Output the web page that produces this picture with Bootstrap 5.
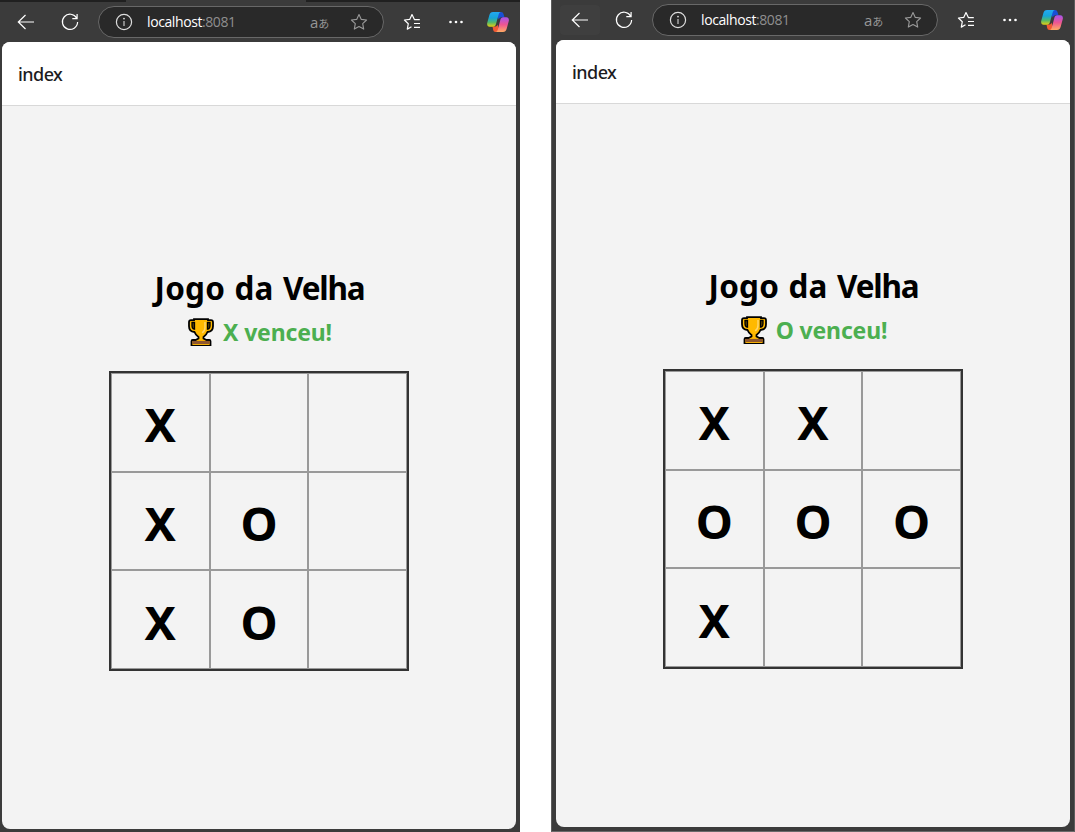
<!DOCTYPE html>
<html lang="pt">
<head>
<meta charset="utf-8">
<title>Jogo da Velha</title>
<link href="https://cdn.jsdelivr.net/npm/bootstrap@5.3.0/dist/css/bootstrap.min.css" rel="stylesheet">
<style>
body{background:#fff;font-family:"Noto Sans","Open Sans",sans-serif;width:1075px;height:832px;overflow:hidden}
.browser{background:#3b3b3b;height:832px}
.first{width:520px;padding:0 4px 3px 2px}
.second{width:524px;margin-left:31px;padding:0 4px 4px 4px;border-left:1px solid #5c5c5c;border-right:1px solid #5c5c5c;border-bottom:1px solid #6a6a6a}
.tabs{height:2px;margin:0 -4px 0 -2px}
.tabs span{background:#202020;height:2px}
.toolbar{height:40px;margin-left:2px;margin-right:-4px;color:#fff}
.tool{width:44px;height:40px;flex:none}
.tool-last{width:40px}
.hovered{position:relative}
.hovered::before{content:"";position:absolute;inset:5px 2px;border-radius:4px;background:#3f3f3f}
.hovered svg{position:relative}
.address{width:286px;height:32px;border:1px solid #686868;border-radius:16px;background:#292929;margin:0 6px;padding:0 15px 0 16px;flex:none}
.url{font:14px/20px "Open Sans",sans-serif;margin-left:14px;letter-spacing:-.4px}
.url b{font-weight:400;color:#8f8f8f;letter-spacing:-.45px}
.lang{font:15px/18px "Open Sans","Noto Sans CJK JP",sans-serif;color:#969696;width:18px;margin-right:22px;white-space:nowrap}
.lang span{font-size:11px;font-family:"Noto Sans CJK JP",sans-serif}
.viewport{background:#f3f3f3;border-radius:8px;overflow:hidden;height:787px}
.app-head{height:64px;background:#fff;border-bottom:1px solid #d8d8d8;padding-left:16px;font-size:18px;font-weight:500;color:#1c1c1e;line-height:24px;padding-top:20px}
.app-head span{letter-spacing:-.55px}
.app-title{font-size:31.500px;font-weight:700;line-height:43px;color:#000;margin:0 0 0 1px;white-space:nowrap;letter-spacing:.2px;word-spacing:1px}
.app-title span{letter-spacing:-1.2px}
.result{font-size:23px;font-weight:700;line-height:32px;color:#4caf50;margin:7px 0 23px 2px;height:32px;white-space:nowrap;letter-spacing:-.15px}
.result svg{margin-right:9px}
.game{padding-top:160px}
.board{width:300px;height:300px;border:2px solid #333;display:grid;grid-template-columns:repeat(3,1fr);grid-template-rows:repeat(3,1fr)}
.board div{border:1px solid #999;font-size:47px;font-weight:700;line-height:1;color:#000;display:flex;align-items:center;justify-content:center;padding-top:5px}
svg{display:block;flex:none}
</style>
</head>
<body>
<svg width="0" height="0" class="position-absolute" aria-hidden="true">
<defs>
<linearGradient id="ga" x1="0" y1="0" x2="0" y2="1"><stop offset="0" stop-color="#23a9f2"/><stop offset=".4" stop-color="#16a4d8"/><stop offset=".7" stop-color="#52b96a"/><stop offset="1" stop-color="#e8cf10"/></linearGradient>
<linearGradient id="gb" x1="0" y1="0" x2="0" y2="1"><stop offset="0" stop-color="#a554ee"/><stop offset=".5" stop-color="#ee5591"/><stop offset="1" stop-color="#ffab63"/></linearGradient>
<symbol id="back" viewBox="0 0 18 16"><path d="M17 8H1.5M8.5 1L1.3 8l7.2 7" fill="none" stroke="#fff" stroke-width="1.2"/></symbol>
<symbol id="reload" viewBox="0 0 18 18"><path d="M15.7 5.2A7.6 7.6 0 1 0 16.6 9M16.1 1v4.6h-4.8" fill="none" stroke="#fff" stroke-width="1.2"/></symbol>
<symbol id="info" viewBox="0 0 18 18"><circle cx="9" cy="9" r="7.6" fill="none" stroke="#dedede" stroke-width="1.2"/><path d="M9 8v5" stroke="#bbb" stroke-width="1.3"/><circle cx="9" cy="5.6" r=".9" fill="#ddd"/></symbol>
<symbol id="star" viewBox="0 0 18 18"><path d="M9 1.5l2.3 4.9 5.3.6-3.9 3.7 1 5.4L9 13.5l-4.7 2.6 1-5.4L1.4 7l5.3-.6z" fill="none" stroke="#999" stroke-width="1.1" stroke-linejoin="round"/></symbol>
<symbol id="favs" viewBox="0 0 18 18"><path d="M16.8 6.6h-5.4L9 1.5 6.7 6.4 1.4 7l3.900 3.700-1 5.400 4.200-2.300M11 10.500h6M11 14.300h6" fill="none" stroke="#fff" stroke-width="1.2" stroke-linejoin="round"/></symbol>
<symbol id="dots" viewBox="0 0 16 4"><circle cx="2.5" cy="2" r="1.3" fill="#fff"/><circle cx="8" cy="2" r="1.3" fill="#fff"/><circle cx="13.5" cy="2" r="1.3" fill="#fff"/></symbol>
<symbol id="copilot" viewBox="0 0 22 20"><path d="M12 0h2c1.5 0 2.1.8 2.5 2l1 3.2h-3c-1.6 0-2.3 1-2.8 2.3L10 3z" fill="#1950d5"/><path d="M5.5 14.5h3c1 0 1.7-.7 2-2l1.8 6c-.5 1-1 1.5-2 1.5H8.6c-1.7 0-2-.8-2.4-2z" fill="#f15a34"/><path d="M6 0h8c-1.4 0-1.9 1.2-2.4 2.8L9 12c-.5 1.8-1.3 2.8-3 2.8H2.7C.6 14.8-.2 13 .2 11L2.4 3C3 1 4 0 6 0z" fill="url(#ga)"/><path d="M16 20H8.5c1.4 0 1.9-1.2 2.4-2.8L13.3 8c.5-1.8 1.3-2.8 3-2.8h3c2.1 0 2.9 1.8 2.5 3.8L19.6 17c-.6 2-1.6 3-3.6 3z" fill="url(#gb)"/></symbol>
<symbol id="cup" viewBox="0 0 26 28"><path d="M6 1.2h14v1H23c1.2 0 2 .8 2 2v4c0 3.3-2 5.5-5.5 5.8-1 2.6-2.4 4-4 5v1.500l3 1.500h2.800q1.200 0 1.200 1.200v4.600h-19v-4.600q0-1.200 1.200-1.200h2.800l3-1.500v-1.500c-1.600-1-3-2.400-4-5C3 13.700 1 11.500 1 8.200v-4c0-1.200.8-2 2-2h3z" fill="#ffb900" stroke="#000" stroke-width="1.800"/><path d="M6.500 4.500H4v3.200c0 1.800.7 3.200 2.500 3.500zM19.500 4.500H22v3.200c0 1.800-.7 3.200-2.500 3.500z" fill="#5a4200" stroke="#000" stroke-width="1.300"/><path d="M17 4v5.500q0 3.500-2.800 5.300" fill="none" stroke="#ffd56a" stroke-width="1.500"/><path d="M4.400 22.900h17.200v3.200H4.400z" fill="#8e562e"/></symbol>
</defs>
</svg>
<main class="d-flex">
<section class="browser first">
<div class="tabs d-flex justify-content-between"><span style="width:126px"></span><span style="width:214px"></span></div>
<div class="toolbar d-flex align-items-center">
<div class="tool d-flex align-items-center justify-content-center"><svg width="18" height="16"><use href="#back"/></svg></div>
<div class="tool d-flex align-items-center justify-content-center"><svg width="18" height="18"><use href="#reload"/></svg></div>
<div class="address d-flex align-items-center"><svg width="18" height="18"><use href="#info"/></svg><div class="url">localhost<b>:8081</b></div><div class="lang ms-auto">a<span>あ</span></div><svg width="18" height="18"><use href="#star"/></svg></div>
<div class="tool d-flex align-items-center justify-content-center"><svg width="18" height="18"><use href="#favs"/></svg></div>
<div class="tool d-flex align-items-center justify-content-center"><svg width="16" height="4"><use href="#dots"/></svg></div>
<div class="tool tool-last d-flex align-items-center justify-content-center"><svg width="22" height="20"><use href="#copilot"/></svg></div>
</div>
<div class="viewport">
<header class="app-head"><span>index</span></header>
<div class="game d-flex flex-column align-items-center">
<h1 class="app-title">Jogo da <span>Velha</span></h1>
<div class="result d-flex align-items-center"><svg width="26" height="28"><use href="#cup"/></svg><span>X venceu!</span></div>
<div class="board"><div>X</div><div></div><div></div><div>X</div><div>O</div><div></div><div>X</div><div>O</div><div></div></div>
</div>
</div>
</section>
<section class="browser second">
<div class="toolbar d-flex align-items-center">
<div class="tool hovered d-flex align-items-center justify-content-center"><svg width="18" height="16"><use href="#back"/></svg></div>
<div class="tool d-flex align-items-center justify-content-center"><svg width="18" height="18"><use href="#reload"/></svg></div>
<div class="address d-flex align-items-center"><svg width="18" height="18"><use href="#info"/></svg><div class="url">localhost<b>:8081</b></div><div class="lang ms-auto">a<span>あ</span></div><svg width="18" height="18"><use href="#star"/></svg></div>
<div class="tool d-flex align-items-center justify-content-center"><svg width="18" height="18"><use href="#favs"/></svg></div>
<div class="tool d-flex align-items-center justify-content-center"><svg width="16" height="4"><use href="#dots"/></svg></div>
<div class="tool tool-last d-flex align-items-center justify-content-center"><svg width="22" height="20"><use href="#copilot"/></svg></div>
</div>
<div class="viewport">
<header class="app-head"><span>index</span></header>
<div class="game d-flex flex-column align-items-center">
<h1 class="app-title">Jogo da <span>Velha</span></h1>
<div class="result d-flex align-items-center"><svg width="26" height="28"><use href="#cup"/></svg><span>O venceu!</span></div>
<div class="board"><div>X</div><div>X</div><div></div><div>O</div><div>O</div><div>O</div><div>X</div><div></div><div></div></div>
</div>
</div>
</section>
</main>
<script src="https://cdn.jsdelivr.net/npm/bootstrap@5.3.0/dist/js/bootstrap.bundle.min.js"></script>
</body>
</html>
